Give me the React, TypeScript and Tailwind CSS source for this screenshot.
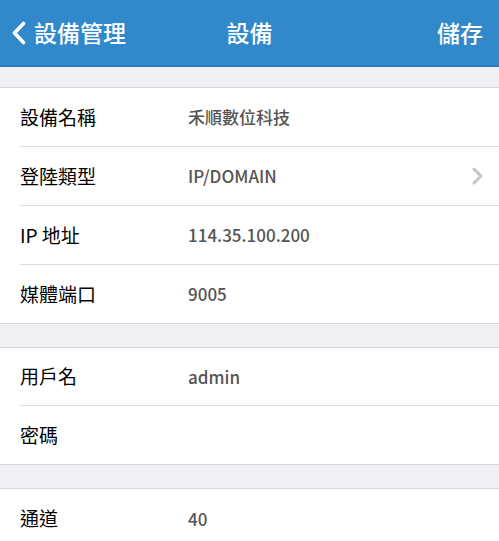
import React from "react";

const font = { fontFamily: '"Noto Sans CJK TC", "Noto Sans", sans-serif' };

function Chevron({ className }: { className?: string }) {
  return (
    <svg viewBox="0 0 11 18" className={className} fill="none">
      <path d="M2 2 L9 9 L2 16" stroke="currentColor" strokeWidth="3" strokeLinecap="round" strokeLinejoin="round" />
    </svg>
  );
}

function Row({ label, value, arrow, last, short }: { label: string; value?: string; arrow?: boolean; last?: boolean; short?: boolean }) {
  return (
    <div className="pl-5">
      <div className={`${short ? "h-[58px]" : "h-[59px]"} flex items-center pr-4 ${last ? "" : "border-b border-[#dcdce0]"}`}>
        <div className="w-[168px] text-[19px] text-black">{label}</div>
        <div className="flex-1 text-[17px] text-[#555555] font-medium">{value}</div>
        {arrow && <Chevron className="w-[11px] h-[18px] text-[#c4c4c9]" />}
      </div>
    </div>
  );
}

function Section({ children }: { children: React.ReactNode }) {
  return <div className="bg-white border-t border-b border-[#d6d6da]">{children}</div>;
}

export default function App() {
  return (
    <div className="w-[499px] h-[541px] overflow-hidden bg-[#efeff4]" style={font}>
      <div className="h-[67px] bg-[#3189cb] border-b-2 border-[#2b7bbb] relative flex items-center">
        <div className="flex items-center pl-[11px] text-white">
          <svg viewBox="0 0 16 24" className="w-[16px] h-[24px]" fill="none">
            <path d="M12.5 2.5 L3.5 12 L12.5 21.5" stroke="currentColor" strokeWidth="3.6" strokeLinecap="round" strokeLinejoin="round" />
          </svg>
          <span className="ml-[7px] text-[23px] font-medium">設備管理</span>
        </div>
        <div className="absolute left-0 right-0 text-center text-white text-[23px] font-medium pointer-events-none">設備</div>
        <div className="ml-auto pr-[16px] text-white text-[23px] font-medium">儲存</div>
      </div>
      <div className="h-[20px]" />
      <Section>
        <Row label="設備名稱" value="禾順數位科技" />
        <Row label="登陸類型" value="IP/DOMAIN" arrow />
        <Row label="IP 地址" value="114.35.100.200" />
        <Row label="媒體端口" value="9005" last short />
      </Section>
      <div className="h-[23px]" />
      <Section>
        <Row label="用戶名" value="admin" short />
        <Row label="密碼" last short />
      </Section>
      <div className="h-[23px]" />
      <Section>
        <Row label="通道" value="40" last />
      </Section>
    </div>
  );
}
